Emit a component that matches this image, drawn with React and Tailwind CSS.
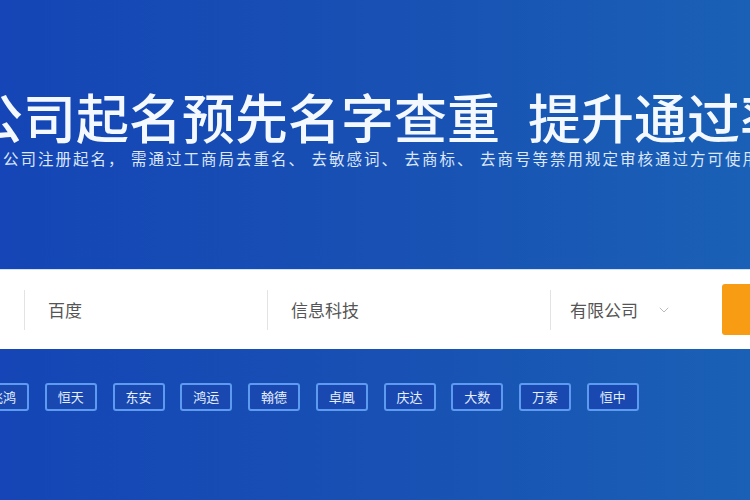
import { ChevronDown } from "lucide-react";

const tags = ["飞鸿", "恒天", "东安", "鸿运", "翰德", "卓凰", "庆达", "大数", "万泰", "恒中"];

export default function App() {
  return (
    <div
      className="h-[500px] w-[750px] overflow-hidden bg-gradient-to-r from-[#1545b6] via-[#1850b3] to-[#1a60b6] text-white"
      style={{ fontFamily: '"Noto Sans CJK SC", "Noto Sans", sans-serif' }}
    >
      {/* Heading */}
      <div className="pt-[90px]">
        <h1 className="ml-[-30px] whitespace-nowrap text-[53px] font-medium leading-none text-[#f4f8ff]">
          公司起名预先名字查重<span className="ml-[28px]">提升通过率</span>
        </h1>
        <p className="ml-[3px] mt-[7px] whitespace-nowrap text-[15.5px] leading-[16px] tracking-[2px] text-[#dce7fb]">
          公司注册起名， 需通过工商局去重名、 去敏感词、 去商标、 去商号等禁用规定审核通过方可使用
        </p>
      </div>

      {/* Search bar */}
      <div className="mt-[103px] flex h-[80px] items-center border-t border-[#cfe0fb] bg-white">
        <div className="ml-[24px] flex h-[40px] w-[243px] items-center border-l border-[#e3e3e3] pl-[23px] text-[17px] text-[#555]">
          百度
        </div>
        <div className="flex h-[40px] w-[283px] items-center border-l border-[#e3e3e3] pl-[23px] text-[17px] text-[#555]">
          信息科技
        </div>
        <div className="flex h-[40px] w-[172px] items-center border-l border-[#e3e3e3] pl-[19px] text-[17px] text-[#555]">
          有限公司
          <ChevronDown className="ml-[18px] h-4 w-4 text-[#bbb]" strokeWidth={1.5} />
        </div>
        <div className="h-[51px] flex-1 rounded-l-[3px] bg-[#f89c14]" />
      </div>

      {/* Tags */}
      <div className="ml-[-23px] mt-[34px] flex gap-[15.75px]">
        {tags.map((t) => (
          <div
            key={t}
            className="flex h-[28px] w-[52px] shrink-0 items-center justify-center rounded-[3px] border-2 border-[#5d9bf0] bg-[#1848b0] text-[13px] text-[#e6efff]"
          >
            {t}
          </div>
        ))}
      </div>
    </div>
  );
}
